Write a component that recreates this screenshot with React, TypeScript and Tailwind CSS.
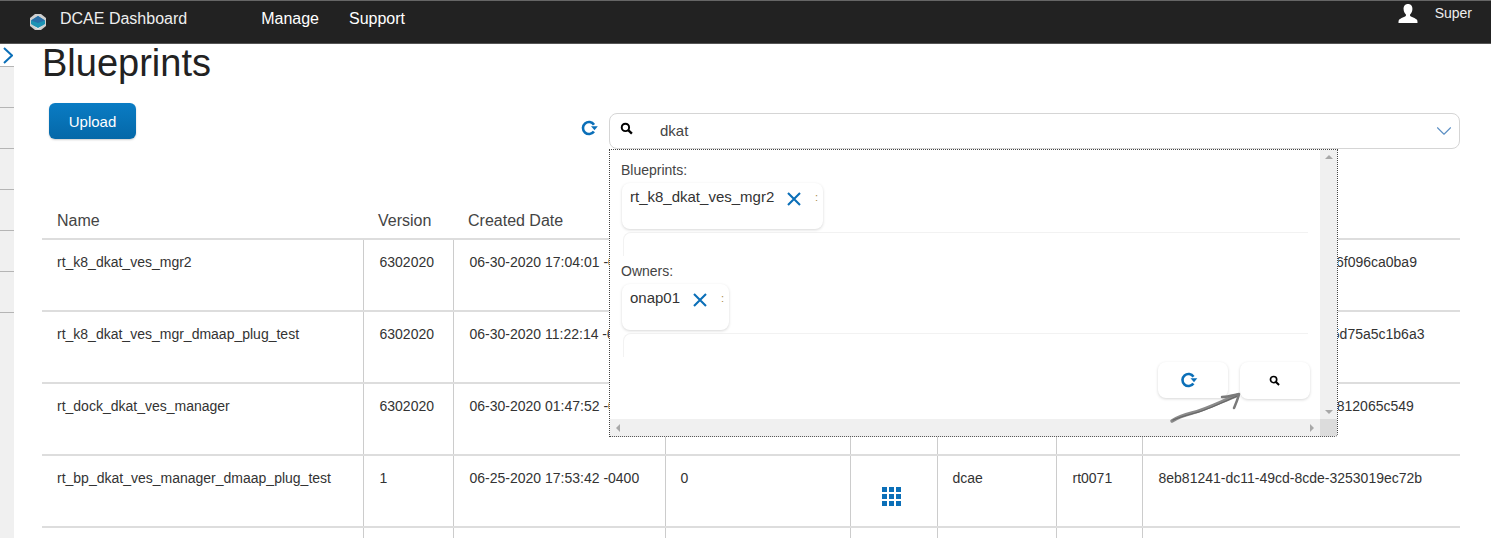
import { ChevronDown } from "lucide-react";

const rows = [
  { name: "rt_k8_dkat_ves_mgr2", version: "6302020", created: "06-30-2020 17:04:01 -0400", id: "4a1c27e0-95f3-4d0e-b7a2-56f096ca0ba9" },
  { name: "rt_k8_dkat_ves_mgr_dmaap_plug_test", version: "6302020", created: "06-30-2020 11:22:14 -0400", id: "a3e8b140-2e6d-47a9-8a11-5d75a5c1b6a3" },
  { name: "rt_dock_dkat_ves_manager", version: "6302020", created: "06-30-2020 01:47:52 -0400", id: "7d20f6f9-e1a4-4f38-a5d7-2e812065c549" },
  { name: "rt_bp_dkat_ves_manager_dmaap_plug_test", version: "1", created: "06-25-2020 17:53:42 -0400", instances: "0", owner: "dcae", service: "rt0071", id: "8eb81241-dc11-49cd-8cde-3253019ec72b", actions: true },
];

const sidebarSlots = [0, 1, 2, 3, 4, 5];

function SearchIcon({ className }: { className?: string }) {
  return (
    <svg viewBox="0 0 12 12" className={className} fill="none" aria-hidden="true">
      <circle cx="5" cy="5" r="3.4" stroke="currentColor" strokeWidth="1.8" />
      <path d="M7.6 7.6L11 10.8" stroke="currentColor" strokeWidth="2.2" />
    </svg>
  );
}

function RefreshIcon({ className }: { className?: string }) {
  return (
    <svg viewBox="0 0 17 16" className={className} aria-hidden="true">
      <path d="M12.9 11.4A6 6 0 1 1 13 4.700" fill="none" stroke="currentColor" strokeWidth="2.6" />
      <path d="M10 6.300h6.800L13.500 10.200z" fill="currentColor" />
    </svg>
  );
}

function Chip({ label, width }: { label: string; width: string }) {
  return (
    <div className={`relative h-[46px] ${width} ml-px rounded-lg bg-white px-2 pt-[5px] shadow-[0_1px_3px_rgba(0,0,0,0.16)]`}>
      <div className="flex items-start">
        <span className="text-[15px] leading-[18px] text-[#333]">{label}</span>
        <svg viewBox="0 0 14 14" className="ml-[13px] mt-[4px] size-[14px]" aria-hidden="true">
          <path d="M1 1l12 12M13 1L1 13" fill="none" stroke="#0b6fb8" strokeWidth="2.1" />
        </svg>
      </div>
      <span className="absolute right-[5px] top-[6px] text-[11px] leading-4 text-[#a98a4a]">:</span>
    </div>
  );
}

export default function App() {
  return (
    <div className="relative h-[538px] w-[1491px] overflow-hidden bg-white font-['Liberation_Sans',Arial,sans-serif] text-[14px] text-[#333]">
      {/* Top bar */}
      <header className="flex h-[44px] items-start border-y border-t-[#666] border-b-[#555] bg-[#222] text-white">
        <div className="ml-[30px] mt-[13px] size-4">
          <svg viewBox="0 0 16 16" className="size-4" aria-hidden="true">
            <rect width="16" height="16" fill="#cfcfcf" />
            <path d="M0 0h5L0 4zM16 0h-5l5 4zM0 16h5l-5-4zM16 16h-5l5-4z" fill="#222" />
            <path d="M8 2l7 4.500v3.500L8 14.500 1 10V6.500z" fill="#1d93b4" />
            <path d="M8 2l7 4.500L8 9 1 6.500z" fill="#2a6fa8" />
            <path d="M3 11.500l5 2.500 5-2.500L8 15.500z" fill="#e8e8e8" />
          </svg>
        </div>
        <span className="ml-[14px] mt-[9px] text-[16px] leading-[18px] text-[#eee]">DCAE Dashboard</span>
        <nav className="ml-[74px] mt-[9px] flex gap-[30px] text-[16px] leading-[18px]">
          <span>Manage</span>
          <span>Support</span>
        </nav>
        <div className="ml-auto mr-[19px] mt-[3px] flex items-start">
          <svg viewBox="0 0 20 20" className="size-5" fill="#fff" aria-hidden="true">
            <path d="M10 0c3 0 4.600 2.200 4.400 5.300-.1 2-.9 3.800-2.100 5-.6.700-.3 1.700.6 2.100 2.200 1 5.100 1.900 6.100 3.400.5.800.5 2.200.5 3.200H.5c0-1 0-2.400.5-3.200 1-1.500 3.900-2.400 6.100-3.400.9-.4 1.200-1.400.6-2.100-1.200-1.200-2-3-2.100-5C5.400 2.200 7 0 10 0z" />
          </svg>
          <span className="ml-[17px] mt-px text-[14px] leading-4 text-[#eee]">Super</span>
        </div>
      </header>

      <div className="flex h-[494px]">
        {/* Collapsed side nav */}
        <aside className="h-full w-[14px] shrink-0 bg-[#f0f0f0]">
          <div className="h-[22px] bg-white pl-[3px] pt-[3px]">
            <svg viewBox="0 0 10 17" className="h-[17px] w-[10px]" fill="none" aria-hidden="true">
              <path d="M1 1l8 7.500L1 16" stroke="#0b6fb8" strokeWidth="2" />
            </svg>
          </div>
          {sidebarSlots.map((slot) => (
            <div key={slot} className="h-[41px] border-t border-[#b5b5b5]" />
          ))}
          <div className="border-t border-[#b5b5b5]" />
        </aside>

        <main className="min-w-0 flex-1 pl-[28px] pr-[31px]">
          <h1 className="h-[59px] text-[38px] leading-[38px] font-normal text-[#222]">Blueprints</h1>

          <div className="flex h-[100px] items-start">
            <button className="ml-[7px] h-[36px] w-[87px] rounded-md bg-gradient-to-b from-[#0a7cc4] to-[#0568a8] pt-[2px] text-[15px] text-white shadow-[0_1px_2px_rgba(0,0,0,0.2)]">
              Upload
            </button>
            <RefreshIcon className="ml-[445px] mt-[17px] h-[16px] w-[17px] text-[#0b6fb8]" />
            <div className="ml-[11px] mt-[10px] flex h-[36px] flex-1 rounded-lg border border-[#d5d5d5]">
              <SearchIcon className="ml-[10px] mt-[8px] size-[13px] text-black" />
              <span className="ml-[27px] mt-[9px] text-[15px] leading-4 text-[#444]">dkat</span>
              <ChevronDown className="ml-auto mr-[2px] mt-[4px] size-[26px] text-[#5b8fc4]" strokeWidth={1} />
            </div>
          </div>

          {/* Results table */}
          <table className="w-[1418px] table-fixed border-collapse text-left">
            <colgroup>
              <col className="w-[321px]" />
              <col className="w-[90px]" />
              <col className="w-[212px]" />
              <col className="w-[185px]" />
              <col className="w-[87px]" />
              <col className="w-[119px]" />
              <col className="w-[86px]" />
              <col />
            </colgroup>
            <thead>
              <tr className="h-[36px] border-b-2 border-[#ddd] text-[16px] font-normal text-[#444]">
                <th className="pl-[15px] font-normal">Name</th>
                <th className="pl-[15px] font-normal">Version</th>
                <th className="pl-[15px] font-normal">Created Date</th>
                <th colSpan={5} />
              </tr>
            </thead>
            <tbody>
              {rows.map((row) => (
                <tr key={row.id} className="h-[72px] border-b-2 border-[#ddd] align-top leading-4">
                  <td className="border-r border-[#ccc] pl-[15px] pt-[14px]">{row.name}</td>
                  <td className="border-r border-[#ccc] pl-[16px] pt-[14px]">{row.version}</td>
                  <td className="border-r border-[#ccc] pl-[16px] pt-[14px] whitespace-nowrap">{row.created}</td>
                  <td className="border-r border-[#ccc] pl-[15px] pt-[14px]">{row.instances}</td>
                  <td className="border-r border-[#ccc] pt-[31px]">
                    {row.actions && (
                      <div className="ml-[31px] grid w-[19px] grid-cols-3 gap-[2px]">
                        {Array.from({ length: 9 }).map((_, i) => (
                          <span key={i} className="size-[5px] bg-[#0b6fb8]" />
                        ))}
                      </div>
                    )}
                  </td>
                  <td className="border-r border-[#ccc] pl-[15px] pt-[14px]">{row.owner}</td>
                  <td className="border-r border-[#ccc] pl-[16px] pt-[14px]">{row.service}</td>
                  <td className="pl-[16px] pt-[14px] whitespace-nowrap">{row.id}</td>
                </tr>
              ))}
              <tr className="h-[12px]">
                <td className="border-r border-[#ccc]" />
                <td className="border-r border-[#ccc]" />
                <td className="border-r border-[#ccc]" />
                <td className="border-r border-[#ccc]" />
                <td className="border-r border-[#ccc]" />
                <td className="border-r border-[#ccc]" />
                <td className="border-r border-[#ccc]" />
                <td />
              </tr>
            </tbody>
          </table>
        </main>
      </div>

      {/* Search dropdown */}
      <div className="absolute left-[609px] top-[149px] h-[288px] w-[729px] overflow-hidden rounded-br-sm border border-dotted border-[#444] bg-white">
        <div className="px-[11px] pt-[12px]">
          <p className="text-[14px] leading-4 text-[#444]">Blueprints:</p>
          <div className="mt-[5px]">
            <Chip label="rt_k8_dkat_ves_mgr2" width="w-[201px]" />
          </div>
          <div className="ml-[2px] mt-[3px] h-[24px] w-[685px] rounded-tl-lg border-l border-t border-[#f2f2f2]" />
          <p className="mt-[7px] text-[14px] leading-4 text-[#444]">Owners:</p>
          <div className="mt-[5px]">
            <Chip label="onap01" width="w-[107px]" />
          </div>
          <div className="ml-[2px] mt-[3px] h-[24px] w-[685px] rounded-tl-lg border-l border-t border-[#f2f2f2]" />
          <div className="mt-[5px] flex justify-end gap-[12px] pr-[16px]">
            <button className="flex h-[36px] w-[70px] items-center justify-center rounded-lg bg-white pr-[8px] shadow-[0_1px_3px_rgba(0,0,0,0.16)]">
              <RefreshIcon className="h-[16px] w-[18px] text-[#0b6fb8]" />
            </button>
            <button className="flex h-[37px] w-[70px] items-center justify-center rounded-lg bg-white pr-px shadow-[0_1px_3px_rgba(0,0,0,0.16)]">
              <SearchIcon className="size-[11px] text-black" />
            </button>
          </div>
        </div>

        {/* Scrollbars */}
        <div className="absolute right-0 top-0 flex h-[269px] w-[17px] flex-col items-center justify-between bg-[#f0f0f0] py-[5px]">
          <span className="border-x-[4px] border-b-[4px] border-x-transparent border-b-[#a8a8a8]" />
          <span className="border-x-[4px] border-t-[4px] border-x-transparent border-t-[#a8a8a8]" />
        </div>
        <div className="absolute bottom-0 left-0 flex h-[17px] w-[710px] items-center justify-between bg-[#f0f0f0] px-[6px]">
          <span className="border-y-[4px] border-r-[4px] border-y-transparent border-r-[#a8a8a8]" />
          <span className="border-y-[4px] border-l-[4px] border-y-transparent border-l-[#a8a8a8]" />
        </div>
        <div className="absolute bottom-0 right-0 size-[17px] bg-[#dcdcdc]" />

        {/* Hand-drawn arrow annotation */}
        <svg viewBox="0 0 80 40" className="absolute left-[555px] top-[238px] h-[40px] w-[80px]" fill="none" aria-hidden="true">
          <path d="M7 33c6-4 12-6 20-8 16-4 32-13 46-18" stroke="#8a8a8a" strokeWidth="3.500" strokeLinecap="round" />
          <path d="M8 32c7-3 14-5 22-7 12-3 26-10 42-17" stroke="#666" strokeWidth="1.200" strokeLinecap="round" />
          <path d="M57 9c6 0 12-2 17-3-1 5-3 9-5 14" stroke="#7a7a7a" strokeWidth="2.500" strokeLinecap="round" strokeLinejoin="round" />
        </svg>
      </div>
    </div>
  );
}
